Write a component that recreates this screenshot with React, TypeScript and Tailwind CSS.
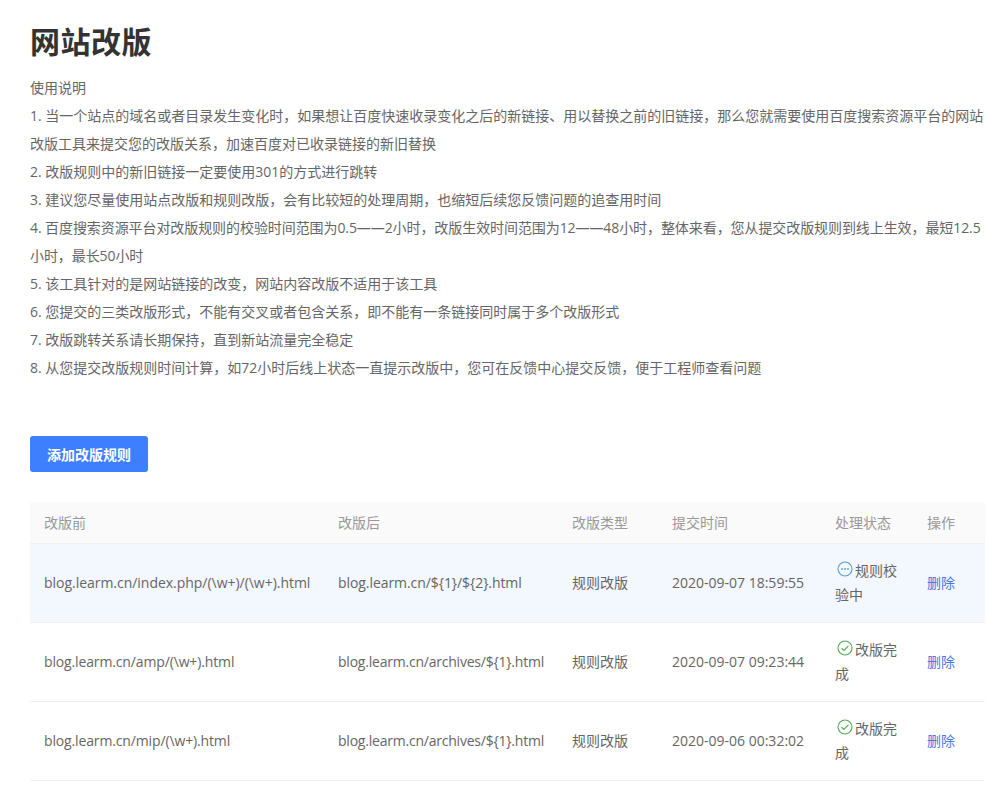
const notes = [
  "使用说明",
  "1. 当一个站点的域名或者目录发生变化时，如果想让百度快速收录变化之后的新链接、用以替换之前的旧链接，那么您就需要使用百度搜索资源平台的网站改版工具来提交您的改版关系，加速百度对已收录链接的新旧替换",
  "2. 改版规则中的新旧链接一定要使用301的方式进行跳转",
  "3. 建议您尽量使用站点改版和规则改版，会有比较短的处理周期，也缩短后续您反馈问题的追查用时间",
  "4. 百度搜索资源平台对改版规则的校验时间范围为0.5——2小时，改版生效时间范围为12——48小时，整体来看，您从提交改版规则到线上生效，最短12.5小时，最长50小时",
  "5. 该工具针对的是网站链接的改变，网站内容改版不适用于该工具",
  "6. 您提交的三类改版形式，不能有交叉或者包含关系，即不能有一条链接同时属于多个改版形式",
  "7. 改版跳转关系请长期保持，直到新站流量完全稳定",
  "8. 从您提交改版规则时间计算，如72小时后线上状态一直提示改版中，您可在反馈中心提交反馈，便于工程师查看问题",
];

const rows = [
  {
    before: "blog.learm.cn/index.php/(\\w+)/(\\w+).html",
    beforeClass: "tracking-[-0.03px]",
    after: "blog.learm.cn/${1}/${2}.html",
    afterClass: "tracking-[-0.07px]",
    time: "2020-09-07 18:59:55",
    status: "规则校验中",
    pending: true,
  },
  {
    before: "blog.learm.cn/amp/(\\w+).html",
    beforeClass: "tracking-[-0.14px]",
    after: "blog.learm.cn/archives/${1}.html",
    afterClass: "tracking-[-0.22px]",
    time: "2020-09-07 09:23:44",
    status: "改版完成",
    pending: false,
  },
  {
    before: "blog.learm.cn/mip/(\\w+).html",
    beforeClass: "tracking-[-0.14px]",
    after: "blog.learm.cn/archives/${1}.html",
    afterClass: "tracking-[-0.22px]",
    time: "2020-09-06 00:32:02",
    status: "改版完成",
    pending: false,
  },
];

const StatusIcon = ({ pending }: { pending: boolean }) => (
  <svg
    className="inline-block w-[16px] h-[16px] ml-[2px] mr-[2px] align-[-1px]"
    viewBox="0 0 16 16"
    fill="none">
    <circle cx="8" cy="8" r="7" stroke={pending ? "#5b9bd5" : "#52a852"} strokeWidth="1.1" />
    {pending ? (
      <g fill="#5b9bd5">
        <circle cx="5" cy="8" r="0.9" />
        <circle cx="8" cy="8" r="0.9" />
        <circle cx="11" cy="8" r="0.9" />
      </g>
    ) : (
      <path d="M4.6 8.2l2.4 2.3 4.4-4.6" stroke="#52a852" strokeWidth="1.2" />
    )}
  </svg>
);

export default function App() {
  return (
    <div className="bg-white min-h-[800px] pl-[30px] pr-[3px] font-['Open_Sans','Noto_Sans_CJK_SC',sans-serif] text-[14px] text-[#666] overflow-hidden">
      <h1 className="pt-[21px] h-[74px] text-[30px] leading-[42px] font-bold text-[#333] tracking-[0.5px]">网站改版</h1>
      <div className="leading-[28px]">
        {notes.map((line, i) => (
          <p key={line} className={i === 4 ? "tracking-[-0.08px]" : ""}>
            {line}
          </p>
        ))}
      </div>
      <button className="block mt-[54px] w-[118px] h-[36px] bg-[#3d7fff] rounded-[3px] text-white text-[14px] font-bold">
        添加改版规则
      </button>
      <table className="mt-[30px] w-[955px] table-fixed border-collapse">
        <colgroup>
          <col className="w-[294px]" />
          <col className="w-[234px]" />
          <col className="w-[100px]" />
          <col className="w-[163px]" />
          <col className="w-[92px]" />
          <col className="w-[72px]" />
        </colgroup>
        <thead>
          <tr className="h-[41px] bg-[#fafafa] border-b border-[#f0f0f0] text-left text-[#999]">
            <th className="pl-[14px] font-normal">改版前</th>
            <th className="pl-[14px] font-normal">改版后</th>
            <th className="pl-[14px] font-normal">改版类型</th>
            <th className="pl-[14px] font-normal">提交时间</th>
            <th className="pl-[14px] font-normal">处理状态</th>
            <th className="pl-[14px] font-normal">操作</th>
          </tr>
        </thead>
        <tbody>
          {rows.map((row, i) => (
            <tr key={row.time} className={`h-[79px] border-b border-[#f0f0f0] ${i === 0 ? "bg-[#f3f7fe]" : ""}`}>
              <td className={`pl-[14px] whitespace-nowrap ${row.beforeClass}`}>{row.before}</td>
              <td className={`pl-[14px] whitespace-nowrap ${row.afterClass}`}>{row.after}</td>
              <td className="pl-[14px]">规则改版</td>
              <td className="pl-[14px] whitespace-nowrap">{row.time}</td>
              <td className="pl-[14px] pr-[14px] leading-[24px]">
                <StatusIcon pending={row.pending} />
                {row.status}
              </td>
              <td className="pl-[14px]">
                <a className="text-[#4a78e0]">删除</a>
              </td>
            </tr>
          ))}
        </tbody>
      </table>
    </div>
  );
}
